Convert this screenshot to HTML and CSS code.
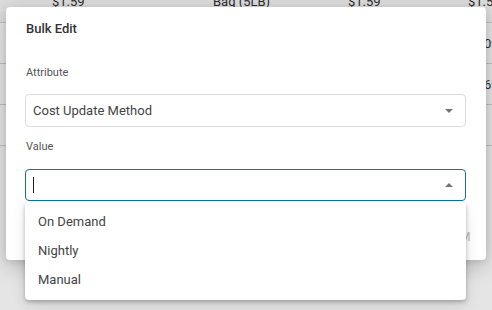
FILE: index.html
```html
<!DOCTYPE html>
<html>
<head>
<meta charset="utf-8">
<link rel="stylesheet" href="styles.css">
</head>
<body>
<div class="page">
  <div class="table">
    <div class="row head">
      <span class="c1">$1.59</span><span class="c2">Bag (5LB)</span><span class="c3">$1.59</span><span class="c4">$1.59</span>
    </div>
    <div class="row"><span class="c1"></span><span class="c2"></span><span class="c3"></span><span class="c4">$1.09</span></div>
    <div class="row"><span class="c1"></span><span class="c2"></span><span class="c3"></span><span class="c4">$1.69</span></div>
    <div class="row"></div>
  </div>
  <div class="backdrop"></div>
  <div class="dialog">
    <h2 class="title">Bulk Edit</h2>
    <label class="label">Attribute</label>
    <div class="select">
      <span class="select-text">Cost Update Method</span>
      <svg class="arrow" width="8" height="4" viewBox="0 0 8 4"><path d="M0 0h8L4 4z" fill="#757575"/></svg>
    </div>
    <label class="label value-label">Value</label>
    <div class="select focused">
      <span class="caret"></span>
      <svg class="arrow" width="8" height="4" viewBox="0 0 8 4"><path d="M0 4h8L4 0z" fill="#757575"/></svg>
    </div>
    <div class="actions"><span class="btn">CONFIRM</span></div>
  </div>
  <ul class="menu">
    <li>On Demand</li>
    <li>Nightly</li>
    <li>Manual</li>
  </ul>
</div>
</body>
</html>
```
FILE: styles.css
```css
* { box-sizing: border-box; }
html, body { margin: 0; padding: 0; }
body {
  width: 492px;
  height: 310px;
  overflow: hidden;
  font-family: Roboto, "Liberation Sans", sans-serif;
  background: #fff;
}
.page { position: relative; width: 492px; height: 310px; }
.table { display: flex; flex-direction: column; }
.row {
  display: flex;
  height: 41px;
  border-bottom: 1px solid #d6d6d6;
  font-size: 13px;
  color: #333;
  white-space: nowrap;
}
.row.head { height: 23px; background: #f6f6f6; }
.row span { display: block; flex: 0 0 auto; }
.row .c1 { margin-left: 52px; width: 161px; }
.row .c2 { width: 135px; }
.row .c3 { width: 120px; }
.row .c4 { width: 24px; }
.row.head span { line-height: 14px; margin-top: -5px; }
.row:not(.head) span { line-height: 41px; }
.row:not(.head) .c4 { margin-left: -2px; }
.backdrop {
  position: absolute;
  inset: 0;
  background: rgba(0, 0, 0, 0.1);
}
.dialog {
  position: absolute;
  left: 6px;
  top: 7px;
  width: 480px;
  height: 253px;
  background: #fff;
  border-radius: 4px;
  box-shadow: 0 6px 22px rgba(0, 0, 0, 0.22), 0 2px 6px rgba(0, 0, 0, 0.08);
  padding: 0 20px 0 19px;
  display: flex;
  flex-direction: column;
}
.title {
  margin: 14px 0 0 1px;
  font-size: 13px;
  font-weight: 500;
  line-height: 16px;
  color: #333;
}
.label {
  display: block;
  margin: 29px 0 0 1px;
  font-size: 11px;
  line-height: 14px;
  color: #555;
}
.value-label { margin-top: 13px; }
.select {
  margin-top: 14px;
  height: 33px;
  border: 1px solid #dcdcdc;
  border-radius: 4px;
  display: flex;
  align-items: center;
  padding: 0 12px 0 7px;
}
.value-label + .select { margin-top: 15px; height: 32px; }
.select-text { flex: 1; font-size: 13px; color: #444; }
.select.focused { border-color: #0f72a8; }
.caret { width: 1px; height: 16px; background: #222; flex: 0 0 1px; }
.focused .arrow { margin-left: auto; }
.arrow { flex: 0 0 auto; width: 8px; height: 4px; }
.actions { margin-top: auto; padding-bottom: 16px; display: flex; justify-content: flex-end; }
.btn { font-size: 12px; color: #bbb; letter-spacing: 0.5px; margin-right: -5px; }
.menu {
  position: absolute;
  left: 25px;
  top: 202px;
  width: 441px;
  height: 98px;
  margin: 0;
  padding: 5px 0;
  list-style: none;
  background: #fff;
  border-radius: 4px;
  box-shadow: 0 2px 4px rgba(0, 0, 0, 0.25), 0 6px 16px rgba(0, 0, 0, 0.10);
}
.menu li {
  height: 29px;
  line-height: 29px;
  padding-left: 13px;
  font-size: 13px;
  color: #444;
}
```
